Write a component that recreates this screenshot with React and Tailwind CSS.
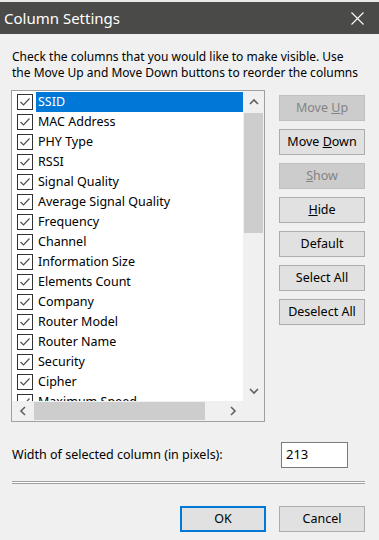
import React from "react";

const items = [
  "SSID",
  "MAC Address",
  "PHY Type",
  "RSSI",
  "Signal Quality",
  "Average Signal Quality",
  "Frequency",
  "Channel",
  "Information Size",
  "Elements Count",
  "Company",
  "Router Model",
  "Router Name",
  "Security",
  "Cipher",
  "Maximum Speed",
];

function Check() {
  return (
    <div className="w-[16px] h-[16px] shrink-0 border border-[#333333] bg-white flex items-center justify-center">
      <svg width="14" height="14" viewBox="0 0 14 14">
        <polyline points="2.5,7 5.5,10 11.5,3.5" fill="none" stroke="#4d4d4d" strokeWidth="1.2" />
      </svg>
    </div>
  );
}

function Btn({ children, disabled, primary }) {
  const base = "w-[86px] h-[26px] flex items-center justify-center text-[12.5px] leading-none whitespace-pre";
  if (disabled)
    return <div className={base + " bg-[#cccccc] border border-[#bfbfbf] text-[#838383]"}><span>{children}</span></div>;
  if (primary)
    return <div className={base + " bg-[#e1e1e1] border-2 border-[#0078d7] text-black"}><span>{children}</span></div>;
  return <div className={base + " bg-[#e1e1e1] border border-[#adadad] text-black"}><span>{children}</span></div>;
}

function Chevron({ dir }) {
  const pts = {
    up: "1,6 5,2 9,6",
    down: "1,2 5,6 9,2",
    left: "6,1 2,5 6,9",
    right: "2,1 6,5 2,9",
  }[dir];
  const vertical = dir === "up" || dir === "down";
  return (
    <svg width={vertical ? 10 : 8} height={vertical ? 8 : 10} viewBox={vertical ? "0 0 10 8" : "0 0 8 10"}>
      <polyline points={pts} fill="none" stroke="#606060" strokeWidth="1.6" />
    </svg>
  );
}

export default function App() {
  return (
    <div className="w-[379px] h-[540px] bg-[#f0f0f0] flex flex-col font-['Noto_Sans',sans-serif] text-black overflow-hidden">
      <div className="h-[2px] bg-[#e9e9e9]" />
      <div className="h-[32px] bg-[#4a4a48] flex items-center justify-between pl-[4px] pr-[15px]">
        <span className="text-white text-[15px] leading-none">Column Settings</span>
        <svg width="13" height="13" viewBox="0 0 13 13">
          <path d="M0.5 0.5 L12.5 12.5 M12.5 0.5 L0.5 12.5" stroke="#ffffff" strokeWidth="1.1" />
        </svg>
      </div>
      <div className="flex flex-col pl-[11px] pr-[14px]">
        <div className="pt-[15px] pl-[1px] text-[12px] leading-[16px]">
          <div>Check the columns that you would like to make visible. Use</div>
          <div>the Move Up and Move Down buttons to reorder the columns</div>
        </div>
        <div className="flex mt-[9px]">
          <div className="w-[254px] h-[332px] border border-[#a0a0a0] flex flex-col">
            <div className="flex h-[310px]">
              <div className="flex-1 bg-white overflow-hidden pt-[1px]">
                {items.map((it, i) => (
                  <div key={it} className="h-[20px] flex items-center pl-[5px]">
                    <Check />
                    <div
                      className={
                        "ml-[3px] flex-1 h-[20px] flex items-center pl-[2px] text-[12.5px] whitespace-nowrap " +
                        (i === 0 ? "bg-[#0078d7] text-white" : "")
                      }
                    >
                      {it}
                    </div>
                  </div>
                ))}
              </div>
              <div className="w-[21px] flex flex-col bg-[#f0f0f0]">
                <div className="h-[21px] flex items-center justify-center">
                  <Chevron dir="up" />
                </div>
                <div className="flex-1 px-[1px]">
                  <div className="mt-[1px] h-[120px] bg-[#cdcdcd]" />
                </div>
                <div className="h-[21px] flex items-center justify-center">
                  <Chevron dir="down" />
                </div>
              </div>
            </div>
            <div className="flex h-[20px] bg-[#f0f0f0]">
              <div className="w-[21px] flex items-center justify-center">
                <Chevron dir="left" />
              </div>
              <div className="flex-1 py-[1px]">
                <div className="ml-[1px] w-[171px] h-full bg-[#cdcdcd]" />
              </div>
              <div className="w-[21px] flex items-center justify-center">
                <Chevron dir="right" />
              </div>
              <div className="w-[21px]" />
            </div>
          </div>
          <div className="ml-[14px] mt-[5px] flex flex-col gap-[8px]">
            <Btn disabled>
              Move <span className="underline">U</span>p
            </Btn>
            <Btn>
              Move <span className="underline">D</span>own
            </Btn>
            <Btn disabled>
              <span className="underline">S</span>how
            </Btn>
            <Btn>
              <span className="underline">H</span>ide
            </Btn>
            <Btn>Default</Btn>
            <Btn>Select All</Btn>
            <Btn>Deselect All</Btn>
          </div>
        </div>
        <div className="flex items-center mt-[20px] pl-[1px]">
          <span className="text-[12.5px] flex-1">Width of selected column (in pixels):</span>
          <div className="w-[67px] h-[26px] mr-[17px] bg-white border border-[#7a7a7a] flex items-center pl-[4px] text-[13px]">
            213
          </div>
        </div>
        <div className="mt-[13px] ml-[1px] h-[3px] border-y border-[#a0a0a0] bg-white" />
        <div className="flex justify-end gap-[13px] mt-[22px]">
          <Btn primary>OK</Btn>
          <Btn>Cancel</Btn>
        </div>
      </div>
    </div>
  );
}
